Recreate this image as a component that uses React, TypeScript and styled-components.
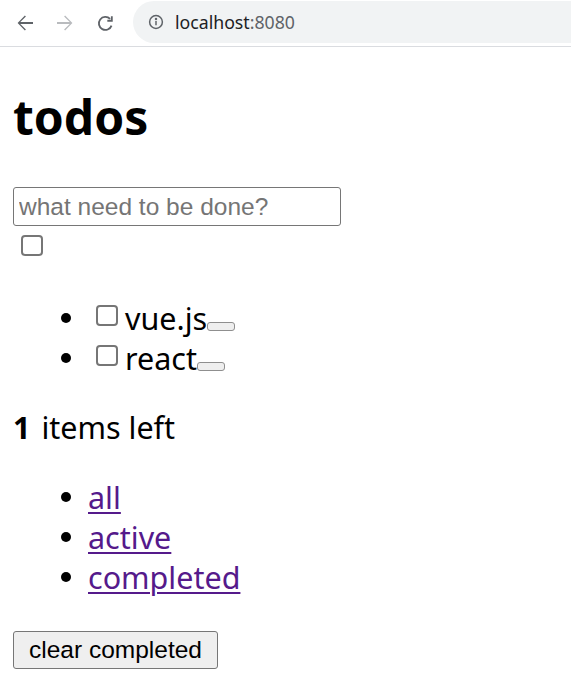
import * as React from "react";
import styled, { createGlobalStyle } from "styled-components";

const GlobalStyle = createGlobalStyle`
    html, body {
        margin: 0;
        padding: 0;
        background: #fff;
    }
    body {
        font-family: "Noto Sans", "Open Sans", sans-serif;
        color: #000;
    }
`;

// browser chrome
const Chrome = styled.div`
    height: 46px;
    display: flex;
    align-items: center;
    border-bottom: 1px solid #dadce0;
    background: #fff;
`;

const NavButton = styled.div<{ dim?: boolean }>`
    width: 40px;
    height: 40px;
    display: flex;
    align-items: center;
    justify-content: center;
    color: ${p => (p.dim ? "#b9bbbe" : "#5f6368")};
    &:first-child {
        margin-left: 5px;
    }
`;

const Omnibox = styled.div`
    flex: 1;
    height: 42px;
    margin-left: 8px;
    margin-top: -3px;
    background: #f1f3f4;
    border-radius: 21px 0 0 21px;
    display: flex;
    align-items: center;
    padding-left: 15px;
    gap: 11px;
`;

const UrlHost = styled.span`
    font-family: "Noto Sans", sans-serif;
    font-size: 17.7px;
    color: #202124;
`;

const UrlPort = styled.span`
    color: #5f6368;
`;

// page
const Page = styled.div`
    padding: 0 13px;
`;

const Title = styled.h1`
    font-size: 48px;
    font-weight: 700;
    line-height: 56px;
    margin: 42px 0 42px;
`;

const NewTodo = styled.input`
    display: block;
    box-sizing: border-box;
    width: 328px;
    height: 39px;
    margin: 0;
    padding: 1px 5px;
    border: 1px solid #767676;
    border-radius: 3px;
    font-family: "Liberation Sans", Arial, sans-serif;
    font-size: 24.5px;
    color: #000;
    &::placeholder {
        color: #757575;
    }
`;

const Check = styled.input.attrs({ type: "checkbox" })<{ top?: number }>`
    appearance: none;
    box-sizing: border-box;
    flex: none;
    width: 22px;
    height: 21px;
    margin: ${p => p.top ?? 0}px 0 0 8px;
    border: 2px solid #767676;
    border-radius: 4px;
    background: #fff;
    display: block;
`;

const List = styled.ul<{ mt: number; mb: number }>`
    list-style: none;
    margin: ${p => p.mt}px 0 ${p => p.mb}px;
    padding: 0 0 0 48px;
    font-size: 30.5px;
    line-height: 40px;
`;

const Item = styled.li`
    display: flex;
    align-items: flex-start;
    height: 40px;
    &::before {
        content: "";
        flex: none;
        width: 10px;
        height: 10px;
        margin: 15px 17px 0 0;
        border-radius: 50%;
        background: #000;
    }
`;

const TodoLabel = styled.label`
    margin-left: 7px;
`;

const Destroy = styled.button`
    flex: none;
    width: 28px;
    height: 9px;
    margin-top: 24px;
    padding: 0;
    border: 1px solid #8f8f8f;
    border-radius: 3px;
    background: #efefef;
`;

const FilterLink = styled.a`
    color: #551a8b;
    text-decoration: underline;
    text-decoration-thickness: 2px;
    text-underline-offset: 3px;
`;

const Counter = styled.div`
    font-size: 30.5px;
    line-height: 40px;
    strong {
        font-weight: 700;
        margin-right: 3px;
    }
`;

const ClearButton = styled.button`
    display: block;
    height: 38px;
    padding: 0 15px;
    border: 1px solid #767676;
    border-radius: 3px;
    background: #efefef;
    font-family: "Liberation Sans", Arial, sans-serif;
    font-size: 24.5px;
    color: #000;
`;

const BackIcon = ({ color }: { color?: string }) => (
    <svg width="24" height="24" viewBox="0 0 24 24" fill={color ?? "currentColor"}>
        <path d="M20 11.1H7.3l5.6-5.6-1-1L4.6 12l7.3 7.5 1-1-5.6-5.6H20z" />
    </svg>
);

const ReloadIcon = () => (
    <svg width="23" height="23" viewBox="0 0 24 24" fill="none" stroke="currentColor" strokeWidth="1.9">
        <path d="M18.3 14.2A6.8 6.8 0 1 1 16.8 7.2" />
        <path d="M18.6 4.4v4.7h-4.7" strokeLinejoin="miter" />
    </svg>
);

const InfoIcon = () => (
    <svg width="16" height="16" viewBox="0 0 16 16" fill="none" stroke="#5f6368" strokeWidth="1.5">
        <circle cx="8" cy="8" r="6.4" />
        <path d="M8 7v4.2" />
        <circle cx="8" cy="4.9" r="0.5" fill="#5f6368" />
    </svg>
);

const todos = [
    { id: 1, title: "vue.js" },
    { id: 2, title: "react" },
];

const filters = ["all", "active", "completed"];

export default function App() {
    return (
        <>
            <GlobalStyle />
            <Chrome>
                <NavButton>
                    <BackIcon />
                </NavButton>
                <NavButton dim>
                    <div style={{ transform: "scaleX(-1)", display: "flex" }}>
                        <BackIcon />
                    </div>
                </NavButton>
                <NavButton>
                    <ReloadIcon />
                </NavButton>
                <Omnibox>
                    <InfoIcon />
                    <UrlHost>
                        localhost<UrlPort>:8080</UrlPort>
                    </UrlHost>
                </Omnibox>
            </Chrome>
            <Page>
                <Title>todos</Title>
                <NewTodo placeholder="what need to be done?" />
                <Check top={9} />
                <List mt={42} mb={29}>
                    {todos.map(t => (
                        <Item key={t.id}>
                            <Check top={7} />
                            <TodoLabel>{t.title}</TodoLabel>
                            <Destroy />
                        </Item>
                    ))}
                </List>
                <Counter>
                    <strong>1</strong> items left
                </Counter>
                <List mt={30} mb={34}>
                    {filters.map(f => (
                        <Item key={f}>
                            <FilterLink href={"#/" + f}>{f}</FilterLink>
                        </Item>
                    ))}
                </List>
                <ClearButton>clear completed</ClearButton>
            </Page>
        </>
    );
}
